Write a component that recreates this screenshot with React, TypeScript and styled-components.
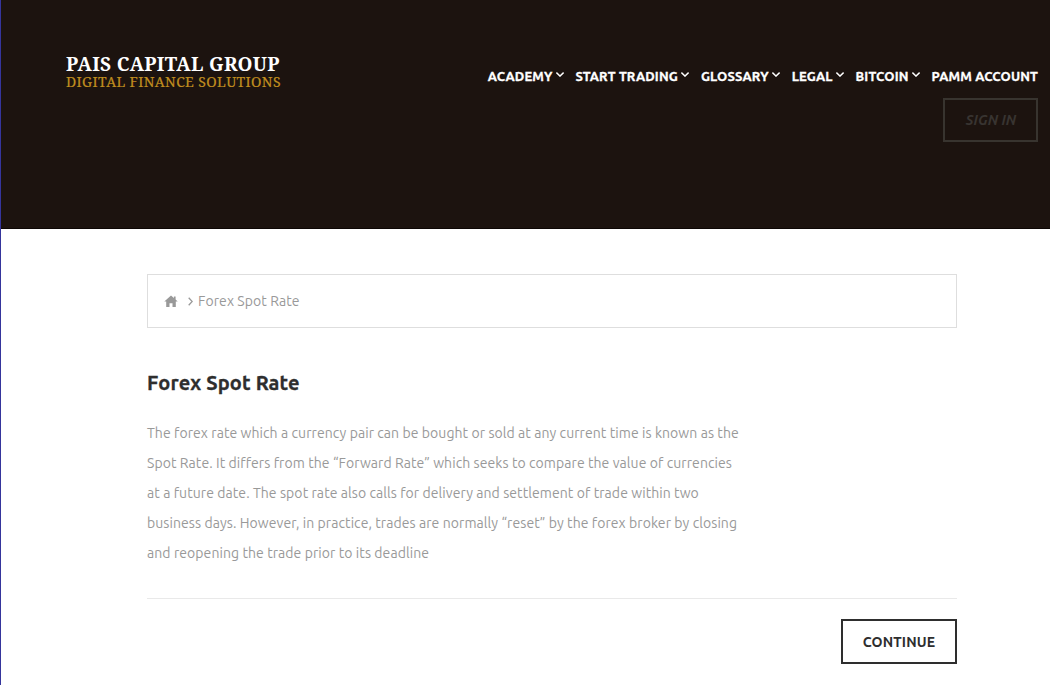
import styled, { createGlobalStyle } from "styled-components";

const GlobalStyle = createGlobalStyle`
  * {
    box-sizing: border-box;
  }

  body {
    margin: 0;
    background-color: #fff;
    font-family: "Ubuntu", "Noto Sans", sans-serif;
  }

  a {
    color: inherit;
    text-decoration: none;
  }
`;

const Page = styled.div`
  min-height: 685px;
  border-left: 1px solid #35359c;
  overflow: hidden;
`;

const HeaderWrap = styled.header`
  display: flex;
  justify-content: space-between;
  align-items: flex-start;
  height: 229px;
  padding: 0 12px 0 65px;
  background-color: #1c130f;
  border-bottom: 1px solid #0d0705;
`;

const Logo = styled.a`
  display: block;
  margin-top: 53px;
  font-family: "Noto Serif", serif;
  white-space: nowrap;

  strong {
    display: block;
    font-size: 19px;
    line-height: 22px;
    letter-spacing: 0.33px;
    color: #fff;
  }

  span {
    display: block;
    font-size: 14px;
    line-height: 14px;
    letter-spacing: 0.39px;
    color: #c08e1f;
    -webkit-text-stroke: 0.2px #c08e1f;
  }
`;

const Menu = styled.nav`
  display: flex;
  flex-direction: column;
  align-items: flex-end;
  margin-top: 66px;

  ul {
    display: flex;
    gap: 12px;
    margin: 0;
    padding: 0;
    list-style: none;
  }

  li {
    display: flex;
    align-items: center;
    height: 20px;
    font-size: 13px;
    font-weight: 700;
    line-height: 20px;
    letter-spacing: 0.155px;
    color: #fff;
    white-space: nowrap;
    -webkit-text-stroke: 0.3px #fff;
  }

  svg {
    display: block;
    margin: -3px 0 0 3px;
  }
`;

const SignIn = styled.a`
  width: 95px;
  height: 44px;
  margin-top: 12px;
  border: 2px solid #38342f;
  font-size: 14px;
  font-style: italic;
  font-weight: 700;
  line-height: 40px;
  letter-spacing: 0.1px;
  text-align: center;
  text-indent: 1px;
  color: #383431;
`;

const Content = styled.main`
  width: 810px;
  margin: 45px 0 0 146px;
`;

const Breadcrumb = styled.div`
  display: flex;
  align-items: center;
  height: 54px;
  padding-left: 16px;
  border: 1px solid #dedede;
  font-size: 14px;
  letter-spacing: 0.08px;
  color: #999;

  svg {
    display: block;
  }

  .arrow {
    margin: 0 5px 0 10px;
  }
`;

const Title = styled.h1`
  margin: 40px 0 0;
  font-size: 20px;
  font-weight: 700;
  line-height: 30px;
  letter-spacing: 0.15px;
  color: #2e2e2e;
  -webkit-text-stroke: 0.3px #2e2e2e;
`;

const Text = styled.div`
  margin-top: 20px;
  padding-bottom: 30px;
  border-bottom: 1px solid #e9e9e9;

  p {
    width: 600px;
    margin: 0;
    font-size: 14px;
    line-height: 30px;
    letter-spacing: 0.075px;
    color: #999;
  }
`;

const Buttons = styled.div`
  display: flex;
  justify-content: flex-end;
  margin-top: 20px;

  button {
    width: 116px;
    height: 45px;
    padding: 0;
    border: 2px solid #2e2e2e;
    background-color: #fff;
    font-family: inherit;
    font-size: 14px;
    font-weight: 700;
    letter-spacing: 0.18px;
    color: #2e2e2e;
    cursor: pointer;
  }
`;

const menu = [
  { name: "ACADEMY", sub: true },
  { name: "START TRADING", sub: true },
  { name: "GLOSSARY", sub: true },
  { name: "LEGAL", sub: true },
  { name: "BITCOIN", sub: true },
  { name: "PAMM ACCOUNT", sub: false },
];

function Header() {
  return (
    <HeaderWrap>
      <Logo href="/">
        <strong>PAIS CAPITAL GROUP</strong>
        <span>DIGITAL FINANCE SOLUTIONS</span>
      </Logo>
      <Menu>
        <ul>
          {menu.map((item) => (
            <li key={item.name}>
              <a href="#">{item.name}</a>
              {item.sub && (
                <svg width="8" height="5" viewBox="0 0 8 5" fill="none">
                  <path d="M0.4 0.6L4 4.1L7.6 0.6" stroke="#fff" strokeWidth="1.4" />
                </svg>
              )}
            </li>
          ))}
        </ul>
        <SignIn href="#">SIGN IN</SignIn>
      </Menu>
    </HeaderWrap>
  );
}

function App() {
  return (
    <Page>
      <GlobalStyle />
      <Header />
      <Content>
        <Breadcrumb>
          <svg width="14" height="12" viewBox="0 0 14 12" fill="#999">
            <path d="M7 0.4L0.3 6.6H2.2V12H5.5V8.2H8.5V12H11.8V6.6H13.7L11.6 4.6V1.4H9.9V3.1Z" />
          </svg>
          <svg className="arrow" width="5" height="9" viewBox="0 0 5 9" fill="none">
            <path d="M0.7 0.8L4.2 4.5L0.7 8.2" stroke="#999" strokeWidth="1.3" />
          </svg>
          Forex Spot Rate
        </Breadcrumb>
        <Title>Forex Spot Rate</Title>
        <Text>
          <p>
            The forex rate which a currency pair can be bought or sold at any
            current time is known as the Spot Rate. It differs from the “Forward
            Rate” which seeks to compare the value of currencies at a future
            date. The spot rate also calls for delivery and settlement of trade
            within two business days. However, in practice, trades are normally
            “reset” by the forex broker by closing and reopening the trade prior
            to its deadline
          </p>
        </Text>
        <Buttons>
          <button>CONTINUE</button>
        </Buttons>
      </Content>
    </Page>
  );
}

export default App;
